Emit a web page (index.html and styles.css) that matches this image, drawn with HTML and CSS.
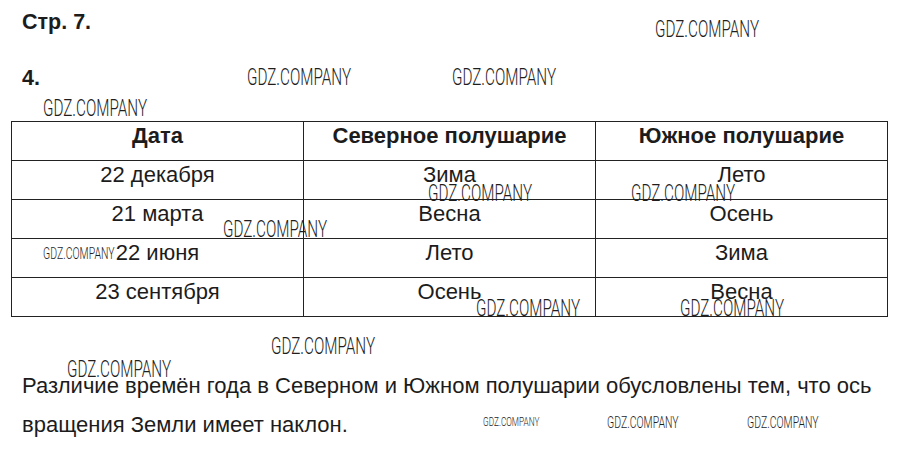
FILE: index.html
```html
<!DOCTYPE html>
<html lang="ru">
<head>
<meta charset="utf-8">
<title>Стр. 7</title>
<link rel="stylesheet" href="styles.css">
</head>
<body>
<main class="page">
  <h1 class="title">Стр. 7.</h1>
  <h2 class="task">4.</h2>
  <table class="seasons">
    <thead>
      <tr><th>Дата</th><th>Северное полушарие</th><th>Южное полушарие</th></tr>
    </thead>
    <tbody>
      <tr><td>22 декабря</td><td>Зима</td><td>Лето</td></tr>
      <tr><td>21 марта</td><td>Весна</td><td>Осень</td></tr>
      <tr><td>22 июня</td><td>Лето</td><td>Зима</td></tr>
      <tr><td>23 сентября</td><td>Осень</td><td>Весна</td></tr>
    </tbody>
  </table>
  <p class="answer">Различие времён года в Северном и Южном полушарии обусловлены тем, что ось вращения Земли имеет наклон.</p>

  <div class="marks" aria-hidden="true">
    <span class="wm" style="left:655px;top:17px">GDZ.COMPANY</span>
    <span class="wm" style="left:247px;top:65px">GDZ.COMPANY</span>
    <span class="wm" style="left:452px;top:65px">GDZ.COMPANY</span>
    <span class="wm" style="left:43px;top:96px">GDZ.COMPANY</span>
    <span class="wm" style="left:428px;top:181px">GDZ.COMPANY</span>
    <span class="wm" style="left:631px;top:181px">GDZ.COMPANY</span>
    <span class="wm" style="left:223px;top:217px">GDZ.COMPANY</span>
    <span class="wm wm-s" style="left:43px;top:246px">GDZ.COMPANY</span>
    <span class="wm" style="left:476px;top:296px">GDZ.COMPANY</span>
    <span class="wm" style="left:680px;top:296px">GDZ.COMPANY</span>
    <span class="wm" style="left:271px;top:334px">GDZ.COMPANY</span>
    <span class="wm" style="left:67px;top:357px">GDZ.COMPANY</span>
    <span class="wm wm-xs" style="left:483px;top:415px">GDZ.COMPANY</span>
    <span class="wm wm-s" style="left:607px;top:415px">GDZ.COMPANY</span>
    <span class="wm wm-s" style="left:747px;top:415px">GDZ.COMPANY</span>
  </div>
</main>
</body>
</html>
```

FILE: styles.css
```css
html, body {
  margin: 0;
  padding: 0;
  background: #fff;
}

.page {
  position: relative;
  width: 905px;
  height: 456px;
  overflow: hidden;
  font-family: "Liberation Sans", Arial, sans-serif;
  color: #1c1c1c;
  padding-top: 10px;
  box-sizing: border-box;
}

.title,
.task {
  margin: 0;
  padding-left: 22px;
  font-size: 21.5px;
  font-weight: bold;
  line-height: 24px;
}

.task {
  margin-top: 32px;
}

.seasons {
  margin: 31px 0 0 11px;
  width: 877px;
  border-collapse: collapse;
  table-layout: fixed;
}

.seasons th,
.seasons td {
  border: 1px solid #222;
  padding: 0 4px;
  text-align: center;
  vertical-align: top;
  line-height: 28px;
  font-size: 22px;
}

.seasons th {
  height: 38px;
  font-weight: bold;
}

.seasons td {
  height: 38px;
  font-weight: normal;
}

.answer {
  margin: 49px 0 0 22px;
  width: 880px;
  font-size: 22px;
  line-height: 39px;
}

.marks {
  position: absolute;
  inset: 0;
  pointer-events: none;
}

.wm {
  position: absolute;
  font-family: Roboto, "Liberation Sans", sans-serif;
  font-weight: 300;
  font-size: 24px;
  line-height: 1;
  color: #1e1e1e;
  white-space: nowrap;
  transform: scaleX(0.635);
  transform-origin: 0 0;
}

.wm-s {
  font-size: 16.5px;
}

.wm-xs {
  font-size: 13px;
}
```
